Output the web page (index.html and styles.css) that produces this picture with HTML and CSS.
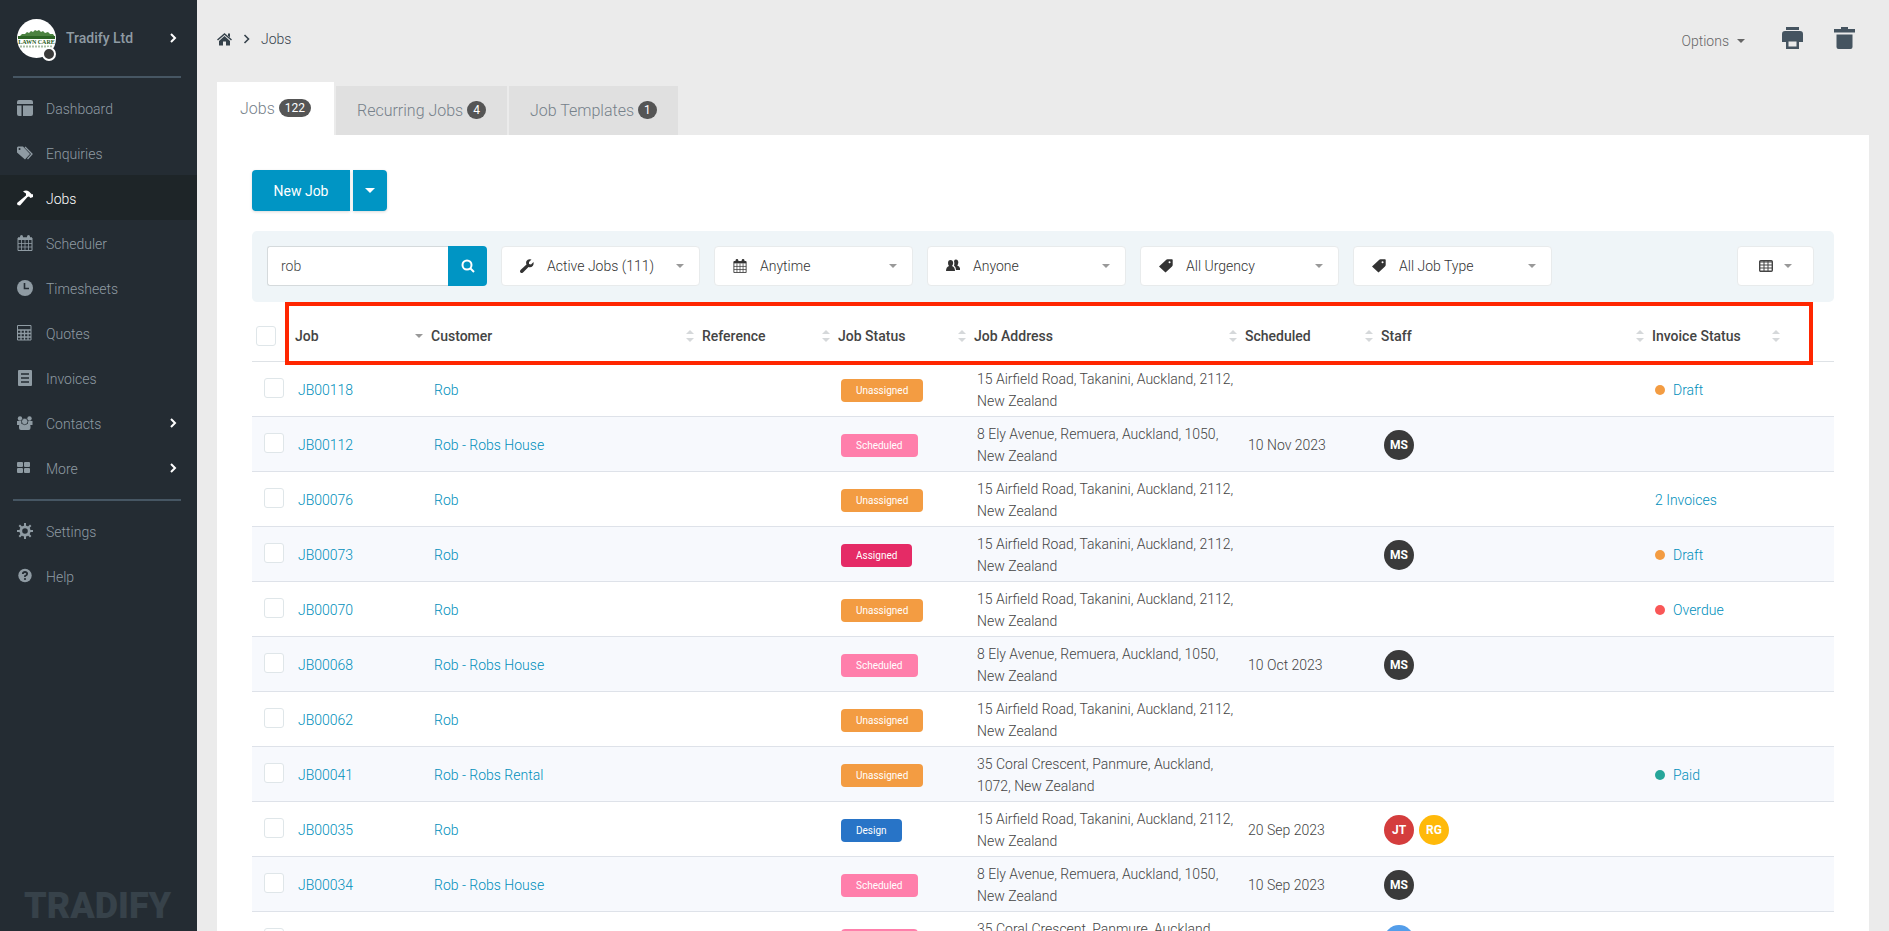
FILE: index.html
```html
<!DOCTYPE html>
<html lang="en">
<head>
    <meta charset="UTF-8">
    <meta name="viewport" content="width=device-width, initial-scale=1.0">
    <title>Jobs</title>

    <link rel="stylesheet" href="styles.css">
</head>

<body>
    <!-- shared icons -->
    <svg class="sprite" aria-hidden="true">
        <symbol id="chevron" viewBox="0 0 8 10"><path d="M2 1l4 4-4 4" fill="none" stroke="currentColor" stroke-width="2"/></symbol>
        <symbol id="calendar" viewBox="0 0 16 16"><path d="M1 3h14v12.500H1z" fill="none" stroke="currentColor"/><path d="M1 2.500h14V5H1z" fill="currentColor"/><path d="M4.500 5v10M8 5v10M11.500 5v10M1 8.500h14M1 12h14" stroke="currentColor" stroke-width=".8"/><rect x="3" y="0" width="3" height="4" rx="1.500" fill="currentColor"/><rect x="10" y="0" width="3" height="4" rx="1.500" fill="currentColor"/></symbol>
        <symbol id="tag" viewBox="0 0 14 14"><path fill="currentColor" fill-rule="evenodd" d="M7 1q.5-.7 1.500-.7H13q.7 0 .7.700V6q0 .8-.7 1.500L6.500 13.500 0 7.500zM10.500 2.200a1 1 0 1 0 .1 2 1 1 0 0 0-.1-2z"/></symbol>
    </svg>

    <div class="layout">
        <aside class="sidebar">
            <a href="#" class="account">
                <span class="avatar">
                    <svg width="39" height="39" viewBox="0 0 39 39">
                        <circle cx="19.500" cy="19.500" r="19.500" fill="#fff"/>
                        <path d="M3 17l2-2 3 0 2-2 2 1 2-2 2 1 2-2 2 1 2-1 2 2 2-1 2 2 3-1 2 2 3 0 2 3v2H1z" fill="#4c8340"/>
                        <path d="M1 17h37v3H1z" fill="#2d6425"/>
                        <text x="19.500" y="25" text-anchor="middle" class="logo-text">LAWN CARE</text>
                        <path d="M3 27.500h33" stroke="#a9bfa4" stroke-width="2" stroke-dasharray="2 1"/>
                    </svg>
                    <i class="presence"></i>
                </span>
                <span class="account-name">Tradify Ltd</span>
                <svg class="arrow"><use href="#chevron"/></svg>
            </a>

            <hr>
            <nav class="menu">
                <a href="#"><svg viewBox="0 0 16 16"><path fill="currentColor" d="M2 0h12q2 0 2 2v2H0V2q0-2 2-2zM0 5.500h4.500V16H2q-2 0-2-2zM6 5.500h10V14q0 2-2 2H6z"/></svg><span>Dashboard</span></a>
                <a href="#"><svg viewBox="0 0 16 16"><path fill="currentColor" fill-rule="evenodd" d="M0 2.500 1 1.500h5l7 7.500-5 5.500-8-7zM2.500 3a1 1 0 1 0 .1 2 1 1 0 0 0-.1-2z"/><path d="M8 2l7 7-4.500 5" fill="none" stroke="currentColor" stroke-width="1.300"/></svg><span>Enquiries</span></a>
                <a href="#" class="active"><svg viewBox="0 0 16 16"><path fill="currentColor" d="M6 1.500Q9-.5 12 1.500l3 3 1-.5v3l-2.500 1L12 6.500 10.500 7 3 15.500.5 15 0 13 9 5.500V3.500z"/></svg><span>Jobs</span></a>
                <a href="#"><svg><use href="#calendar"/></svg><span>Scheduler</span></a>
                <a href="#"><svg viewBox="0 0 16 16"><circle cx="8" cy="8" r="8" fill="currentColor"/><path d="M7.500 3v5.500H12" fill="none" stroke="#242c33" stroke-width="1.600"/></svg><span>Timesheets</span></a>
                <a href="#"><svg viewBox="0 0 16 16"><path fill="none" stroke="currentColor" d="M.5.500h13.500v14.500H.5z"/><path d="M.5 5h13.500M.5 8.500h13.500M.5 12h13.500M4 5v10M7.500 5v10M11 5v10" stroke="currentColor" stroke-width="1.300"/></svg><span>Quotes</span></a>
                <a href="#"><svg viewBox="0 0 16 16"><rect x="1" width="14" height="16" rx="1" fill="currentColor"/><path d="M4 4h8M4 8h8M4 12h8" stroke="#242c33" stroke-width="1.400"/></svg><span>Invoices</span></a>
                <a href="#"><svg viewBox="0 0 16 16"><g fill="currentColor"><circle cx="3" cy="3.500" r="2.200"/><circle cx="12.500" cy="3.500" r="2.200"/><path d="M0 6h4.500v4H0zM11 6h4.500v4H11z"/><rect x="2" y="9" width="11.500" height="6" rx="2"/></g><circle cx="7.700" cy="6.500" r="3.200" fill="currentColor" stroke="#242c33" stroke-width=".7"/></svg><span>Contacts</span><svg class="arrow"><use href="#chevron"/></svg></a>
                <a href="#"><svg viewBox="0 0 16 16"><g fill="currentColor"><rect y="2" width="6" height="5" rx="1"/><rect x="7" y="2" width="6" height="5" rx="1"/><rect y="8" width="6" height="5" rx="1"/><rect x="7" y="8" width="6" height="5" rx="1"/></g></svg><span>More</span><svg class="arrow"><use href="#chevron"/></svg></a>
            </nav>

            <hr>
            <nav class="menu">
                <a href="#"><svg viewBox="0 0 16 16"><circle cx="8" cy="8" r="4.200" fill="none" stroke="currentColor" stroke-width="2.800"/><path d="M8 0v3M8 13v3M0 8h3M13 8h3M2.300 2.300l2.200 2.200M11.500 11.500l2.200 2.200M2.300 13.700l2.200-2.200M11.500 4.500l2.200-2.200" stroke="currentColor" stroke-width="2"/></svg><span>Settings</span></a>
                <a href="#"><svg viewBox="0 0 16 16"><circle cx="8" cy="7.500" r="6.700" fill="currentColor"/><path d="M5.800 6Q6 4 8 4t2.200 1.800Q10.200 7 8 8v1" fill="none" stroke="#242c33" stroke-width="1.800"/><circle cx="8" cy="11" r="1.100" fill="#242c33"/></svg><span>Help</span></a>
            </nav>

            <div class="brand">TRADIFY</div>
        </aside>

        <main class="main">
            <header class="topbar">
                <div class="breadcrumb">
                    <a href="#" aria-label="Home"><svg width="15" height="13" viewBox="0 0 15 13"><path fill="currentColor" d="M7.500 3 13 8v4.500H9V8.500H6v4H2V8z"/><path d="M.5 7l7-6 7 6" fill="none" stroke="currentColor" stroke-width="1.500"/><path fill="currentColor" d="M11 .5h2v4l-2-2z"/></svg></a>
                    <svg width="7" height="10" viewBox="0 0 7 10"><path d="M1.500 1l4 4-4 4" fill="none" stroke="currentColor" stroke-width="1.600"/></svg>
                    <span>Jobs</span>
                </div>
                <div class="tools">
                    <button class="options">Options <i class="caret"></i></button>
                    <button class="tool" aria-label="Print"><svg width="21" height="22" viewBox="0 0 21 22"><path fill="currentColor" fill-rule="evenodd" d="M4 0h13v3H4zM3 4h15q3 0 3 3v8h-4v7H4v-7H0V7q0-3 3-3zM6.500 14.500v5h8v-5z"/></svg></button>
                    <button class="tool" aria-label="Delete"><svg width="21" height="22" viewBox="0 0 21 22"><path fill="currentColor" d="M7 2V0h7v2h7v3.500H0V2zM2.500 7.500h16V20q0 2-2 2h-12q-2 0-2-2z"/></svg></button>
                </div>
            </header>

            <nav class="tabs">
                <a href="#" class="tab current">Jobs <span class="count">122</span></a>
                <a href="#" class="tab">Recurring Jobs <span class="count">4</span></a>
                <a href="#" class="tab">Job Templates <span class="count">1</span></a>
            </nav>

            <section class="panel">
                <div class="actions">
                    <button class="primary new-job">New Job</button>
                    <button class="primary more-new" aria-label="More options"><i class="caret"></i></button>
                </div>

                <div class="filters">
                    <form class="search">
                        <input type="text" aria-label="Search jobs" value="rob">
                        <button type="button" class="primary" aria-label="Search"><svg width="14" height="14" viewBox="0 0 14 14"><circle cx="6" cy="6" r="4.500" fill="none" stroke="currentColor" stroke-width="2"/><path d="M9 9l4 4" stroke="currentColor" stroke-width="2"/></svg></button>
                    </form>
                    <label class="filter">
                        <svg viewBox="0 0 14 14"><path fill="currentColor" d="M13.500 3 11 5.500 9 5V3L11.500.5Q8-.7 6.500 2q-.8 1.500 0 3.500L.5 11q-1 1.500 0 2.500t2.500 0L8.500 8Q11 8.800 12.700 7 14 5.500 13.500 3z"/></svg>
                        <select aria-label="Job status"><option>Active Jobs (111)</option></select>
                        <i class="caret"></i>
                    </label>
                    <label class="filter">
                        <svg><use href="#calendar"/></svg>
                        <select aria-label="Time"><option>Anytime</option></select>
                        <i class="caret"></i>
                    </label>
                    <label class="filter">
                        <svg viewBox="0 0 14 14"><path fill="currentColor" d="M2 4q0-3 2.500-3T7.200 4Q7 6 6 7q3 1 3 5H0q0-4 3-5-1-1-1-3zM8 2q1-2 3-1.200Q13 2 12 5q-.3 1-.8 1.500 3 1 3 4.500H10q0-3-2-4.500.7-2 0-4.500z"/></svg>
                        <select aria-label="Person"><option>Anyone</option></select>
                        <i class="caret"></i>
                    </label>
                    <label class="filter">
                        <svg><use href="#tag"/></svg>
                        <select aria-label="Urgency"><option>All Urgency</option></select>
                        <i class="caret"></i>
                    </label>
                    <label class="filter">
                        <svg><use href="#tag"/></svg>
                        <select aria-label="Job type"><option>All Job Type</option></select>
                        <i class="caret"></i>
                    </label>
                    <button class="columns" aria-label="Columns">
                        <svg width="14" height="12" viewBox="0 0 14 12"><rect x=".7" y=".7" width="12.600" height="10.600" rx="1" fill="none" stroke="currentColor" stroke-width="1.400"/><path d="M1 2h12M1 5h12M1 8h12M5 1v10M9 1v10" stroke="currentColor"/></svg>
                        <i class="caret"></i>
                    </button>
                </div>

                <div class="table-wrap">
                    <div class="highlight"></div>
                    <table class="jobs">
                        <colgroup>
                            <col class="col-check"><col class="col-s"><col class="col-l"><col class="col-s"><col class="col-s">
                            <col class="col-l"><col class="col-s"><col class="col-l"><col class="col-s"><col>
                        </colgroup>
                        <thead>
                            <tr>
                                <th><input type="checkbox" aria-label="Select all"></th>
                                <th><div>Job <i class="sort desc"></i></div></th>
                                <th><div>Customer <i class="sort"></i></div></th>
                                <th><div>Reference <i class="sort"></i></div></th>
                                <th><div>Job Status <i class="sort"></i></div></th>
                                <th><div>Job Address <i class="sort"></i></div></th>
                                <th><div>Scheduled <i class="sort"></i></div></th>
                                <th><div>Staff <i class="sort"></i></div></th>
                                <th><div>Invoice Status <i class="sort"></i></div></th>
                                <th></th>
                            </tr>
                        </thead>
                        <tbody>
                            <tr>
                                <td><input type="checkbox" aria-label="Select JB00118"></td>
                                <td><a href="#">JB00118</a></td>
                                <td><a href="#">Rob</a></td>
                                <td></td>
                                <td><span class="status unassigned">Unassigned</span></td>
                                <td>15 Airfield Road, Takanini, Auckland, 2112, New Zealand</td>
                                <td></td>
                                <td></td>
                                <td><a href="#"><i class="dot draft"></i>Draft</a></td>
                                <td></td>
                            </tr>
                            <tr>
                                <td><input type="checkbox" aria-label="Select JB00112"></td>
                                <td><a href="#">JB00112</a></td>
                                <td><a href="#">Rob - Robs House</a></td>
                                <td></td>
                                <td><span class="status scheduled">Scheduled</span></td>
                                <td>8 Ely Avenue, Remuera, Auckland, 1050, New Zealand</td>
                                <td>10 Nov 2023</td>
                                <td><div class="staff"><span class="ms">MS</span></div></td>
                                <td></td>
                                <td></td>
                            </tr>
                            <tr>
                                <td><input type="checkbox" aria-label="Select JB00076"></td>
                                <td><a href="#">JB00076</a></td>
                                <td><a href="#">Rob</a></td>
                                <td></td>
                                <td><span class="status unassigned">Unassigned</span></td>
                                <td>15 Airfield Road, Takanini, Auckland, 2112, New Zealand</td>
                                <td></td>
                                <td></td>
                                <td><a href="#">2 Invoices</a></td>
                                <td></td>
                            </tr>
                            <tr>
                                <td><input type="checkbox" aria-label="Select JB00073"></td>
                                <td><a href="#">JB00073</a></td>
                                <td><a href="#">Rob</a></td>
                                <td></td>
                                <td><span class="status assigned">Assigned</span></td>
                                <td>15 Airfield Road, Takanini, Auckland, 2112, New Zealand</td>
                                <td></td>
                                <td><div class="staff"><span class="ms">MS</span></div></td>
                                <td><a href="#"><i class="dot draft"></i>Draft</a></td>
                                <td></td>
                            </tr>
                            <tr>
                                <td><input type="checkbox" aria-label="Select JB00070"></td>
                                <td><a href="#">JB00070</a></td>
                                <td><a href="#">Rob</a></td>
                                <td></td>
                                <td><span class="status unassigned">Unassigned</span></td>
                                <td>15 Airfield Road, Takanini, Auckland, 2112, New Zealand</td>
                                <td></td>
                                <td></td>
                                <td><a href="#"><i class="dot overdue"></i>Overdue</a></td>
                                <td></td>
                            </tr>
                            <tr>
                                <td><input type="checkbox" aria-label="Select JB00068"></td>
                                <td><a href="#">JB00068</a></td>
                                <td><a href="#">Rob - Robs House</a></td>
                                <td></td>
                                <td><span class="status scheduled">Scheduled</span></td>
                                <td>8 Ely Avenue, Remuera, Auckland, 1050, New Zealand</td>
                                <td>10 Oct 2023</td>
                                <td><div class="staff"><span class="ms">MS</span></div></td>
                                <td></td>
                                <td></td>
                            </tr>
                            <tr>
                                <td><input type="checkbox" aria-label="Select JB00062"></td>
                                <td><a href="#">JB00062</a></td>
                                <td><a href="#">Rob</a></td>
                                <td></td>
                                <td><span class="status unassigned">Unassigned</span></td>
                                <td>15 Airfield Road, Takanini, Auckland, 2112, New Zealand</td>
                                <td></td>
                                <td></td>
                                <td></td>
                                <td></td>
                            </tr>
                            <tr>
                                <td><input type="checkbox" aria-label="Select JB00041"></td>
                                <td><a href="#">JB00041</a></td>
                                <td><a href="#">Rob - Robs Rental</a></td>
                                <td></td>
                                <td><span class="status unassigned">Unassigned</span></td>
                                <td>35 Coral Crescent, Panmure, Auckland, 1072, New Zealand</td>
                                <td></td>
                                <td></td>
                                <td><a href="#"><i class="dot paid"></i>Paid</a></td>
                                <td></td>
                            </tr>
                            <tr>
                                <td><input type="checkbox" aria-label="Select JB00035"></td>
                                <td><a href="#">JB00035</a></td>
                                <td><a href="#">Rob</a></td>
                                <td></td>
                                <td><span class="status design">Design</span></td>
                                <td>15 Airfield Road, Takanini, Auckland, 2112, New Zealand</td>
                                <td>20 Sep 2023</td>
                                <td><div class="staff"><span class="jt">JT</span><span class="rg">RG</span></div></td>
                                <td></td>
                                <td></td>
                            </tr>
                            <tr>
                                <td><input type="checkbox" aria-label="Select JB00034"></td>
                                <td><a href="#">JB00034</a></td>
                                <td><a href="#">Rob - Robs House</a></td>
                                <td></td>
                                <td><span class="status scheduled">Scheduled</span></td>
                                <td>8 Ely Avenue, Remuera, Auckland, 1050, New Zealand</td>
                                <td>10 Sep 2023</td>
                                <td><div class="staff"><span class="ms">MS</span></div></td>
                                <td></td>
                                <td></td>
                            </tr>
                            <tr>
                                <td><input type="checkbox" aria-label="Select job"></td>
                                <td></td>
                                <td></td>
                                <td></td>
                                <td><span class="status scheduled">Scheduled</span></td>
                                <td>35 Coral Crescent, Panmure, Auckland, 1072, New Zealand</td>
                                <td></td>
                                <td><div class="staff"><span class="blue"></span></div></td>
                                <td></td>
                                <td></td>
                            </tr>
                        </tbody>
                    </table>
                </div>
            </section>
        </main>
    </div>
</body>
</html>
```

FILE: styles.css
```css
*{
    box-sizing: border-box;
}
body{
    margin: 0;
    background-color: #ebebeb;
    color: #444;
    font-family: Roboto, "Liberation Sans", sans-serif;
    font-size: 14px;
    font-weight: 300;
    line-height: 22px;
}
button,
input,
select{
    font: inherit;
    color: inherit;
    margin: 0;
}
button{
    border: 0;
    padding: 0;
    background: none;
    cursor: pointer;
}
a{
    text-decoration: none;
    color: inherit;
}
svg{
    display: block;
    flex: none;
}
.sprite{
    display: none;
}
.layout{
    display: flex;
    height: 100vh;
    overflow: hidden;
}

/* sidebar */
.sidebar{
    width: 197px;
    flex: none;
    display: flex;
    flex-direction: column;
    background-color: #242c33;
    color: #8f9ba3;
}
.sidebar hr{
    width: 168px;
    height: 2px;
    margin: 0 0 0 13px;
    border: 0;
    background-color: #465663;
}
.account{
    height: 76px;
    display: flex;
    align-items: center;
    padding: 0 20px 0 17px;
    font-weight: 500;
}
.avatar{
    position: relative;
    margin-right: 10px;
}
.logo-text{
    font-family: "Liberation Serif", serif;
    font-size: 6px;
    font-weight: 700;
    fill: #1f5a18;
}
.presence{
    position: absolute;
    right: 0;
    bottom: -3px;
    width: 14px;
    height: 14px;
    border: 2px solid #fff;
    border-radius: 50%;
    background-color: #3b3b3b;
}
.arrow{
    width: 8px;
    height: 10px;
    margin-left: auto;
    color: #fff;
}
.menu{
    padding: 7px 0 9px;
}
.menu a{
    height: 45px;
    display: flex;
    align-items: center;
    padding: 0 20px 0 17px;
}
.menu svg:first-child{
    width: 16px;
    height: 16px;
    margin-right: 13px;
}
.menu span{
    padding-top: 3px;
}
.menu .active{
    background-color: #1e2528;
    color: #fff;
}
.brand{
    margin-top: auto;
    padding: 0 0 5px 24px;
    font-size: 36px;
    line-height: 40px;
    font-weight: 900;
    color: #37424a;
}

/* page header */
.main{
    flex: 1;
    min-width: 0;
    padding: 0 20px;
}
.topbar{
    height: 82px;
    display: flex;
    justify-content: space-between;
    align-items: flex-start;
}
.breadcrumb{
    display: flex;
    align-items: center;
    gap: 11px;
    padding-top: 28px;
    color: #36424b;
}
.tools{
    display: flex;
    align-items: center;
    padding: 24px 14px 0 0;
    color: #455460;
}
.options{
    display: flex;
    align-items: center;
    gap: 8px;
    padding-top: 6px;
    margin-right: 6px;
    color: #666;
}
.tool{
    margin-left: 31px;
}
.caret{
    flex: none;
    border: 4px solid transparent;
    border-top-color: currentColor;
    border-bottom: 0;
}

/* tabs */
.tabs{
    display: flex;
    align-items: flex-end;
    gap: 2px;
}
.tab{
    height: 49px;
    display: flex;
    align-items: center;
    gap: 4px;
    padding: 0 21px;
    background-color: #e0e0e0;
    color: #76818a;
    font-size: 16px;
}
.current{
    height: 53px;
    padding: 0 23px;
    background-color: #fff;
}
.count{
    min-width: 18px;
    padding: 0 6px;
    margin-bottom: 1px;
    border-radius: 9px;
    background-color: #555;
    color: #fff;
    font-size: 12px;
    line-height: 18px;
    font-weight: 400;
    text-align: center;
}
.panel{
    padding: 35px;
    background-color: #fff;
}

/* buttons and filters */
.actions{
    display: flex;
    gap: 3px;
    margin-bottom: 20px;
}
.primary{
    display: flex;
    align-items: center;
    justify-content: center;
    background-color: #0095c4;
    color: #fff;
}
.new-job{
    width: 98px;
    height: 41px;
    border-radius: 4px 0 0 4px;
    font-weight: 400;
    box-shadow: 0 1px 3px rgba(0, 0, 0, .15);
}
.more-new{
    width: 34px;
    height: 41px;
    border-radius: 0 4px 4px 0;
    box-shadow: 0 1px 3px rgba(0, 0, 0, .15);
}
.more-new .caret{
    border-width: 5px 5px 0;
}
.filters{
    display: flex;
    gap: 14px;
    padding: 15px 20px 16px 15px;
    border-radius: 5px;
    background-color: #eff5f8;
}
.search{
    display: flex;
    flex: 0 1 220px;
    min-width: 0;
    height: 40px;
}
.search input{
    flex: 1;
    min-width: 0;
    padding: 0 13px;
    border: 1px solid #d5dadc;
    border-right: 0;
    border-radius: 3px 0 0 3px;
    background-color: #fff;
}
.search .primary{
    width: 39px;
    border-radius: 0 4px 4px 0;
}
.filter,
.columns{
    height: 40px;
    display: flex;
    align-items: center;
    border: 1px solid #e8ebec;
    border-radius: 4px;
    background-color: #fff;
}
.filter{
    flex: 0 1 199px;
    min-width: 0;
    padding: 0 15px 0 18px;
    color: #333;
}
.filter svg{
    width: 14px;
    height: 14px;
    margin-right: 13px;
}
.filter select{
    flex: 1;
    min-width: 0;
    padding: 0;
    border: 0;
    background: none;
    appearance: none;
}
.filter .caret,
.columns .caret{
    border-top-color: #999;
}
.columns{
    width: 77px;
    margin-left: auto;
    justify-content: center;
    gap: 11px;
}

/* job list */
.table-wrap{
    position: relative;
}
.highlight{
    position: absolute;
    top: 0;
    left: 33px;
    right: 21px;
    height: 63px;
    border: 4px solid #ff2600;
    pointer-events: none;
}
.jobs{
    width: 100%;
    table-layout: fixed;
    border-spacing: 0;
}
.col-check{
    width: 39px;
}
.col-s{
    width: 136px;
}
.col-l{
    width: 271px;
}
.jobs th{
    height: 60px;
    padding: 9px 4px 0;
    border-bottom: 1px solid #dee2e6;
    font-weight: 500;
    text-align: left;
}
.jobs th div{
    display: flex;
    align-items: center;
    justify-content: space-between;
}
.jobs td{
    height: 55px;
    padding: 6px 4px 4px 7px;
    border-bottom: 1px solid #dee2e9;
}
.jobs td:first-child{
    padding: 4px 4px 6px 12px;
}
.jobs tbody tr:nth-child(even){
    background-color: #f7f9fd;
}
.jobs td a{
    color: #008fbb;
}
.jobs input{
    display: block;
    width: 20px;
    height: 20px;
    border: 1px solid #dfe6e9;
    border-radius: 3px;
    background-color: #fff;
    appearance: none;
}
.sort{
    width: 8px;
    display: grid;
    gap: 4px;
}
.sort::before,
.sort::after{
    content: "";
    border: 4px solid transparent;
}
.sort::before{
    border-top: 0;
    border-bottom-color: #d5d8da;
}
.sort::after{
    border-bottom: 0;
    border-top-color: #d5d8da;
}
.desc::before{
    display: none;
}
.desc::after{
    border-top-color: #999;
}
.status{
    display: inline-block;
    padding: 0 15px;
    border-radius: 4px;
    color: #fff;
    font-size: 10px;
    line-height: 23px;
    font-weight: 400;
    vertical-align: middle;
}
.unassigned{
    background-color: #f39c42;
}
.scheduled{
    background-color: #ff7fab;
}
.assigned{
    background-color: #e52b66;
}
.design{
    background-color: #2874c7;
}
.dot{
    display: inline-block;
    width: 10px;
    height: 10px;
    margin-right: 8px;
    border-radius: 50%;
}
.draft{
    background-color: #f39c42;
}
.overdue{
    background-color: #f95757;
}
.paid{
    background-color: #26a69a;
}
.staff{
    display: flex;
    gap: 5px;
}
.staff span{
    width: 30px;
    height: 30px;
    border-radius: 50%;
    color: #fff;
    font-size: 12px;
    line-height: 30px;
    font-weight: 700;
    text-align: center;
}
.ms{
    background-color: #3a3a3a;
}
.jt{
    background-color: #d43d3d;
}
.rg{
    background-color: #ffb90a;
}
.blue{
    background-color: #549eea;
}
```
